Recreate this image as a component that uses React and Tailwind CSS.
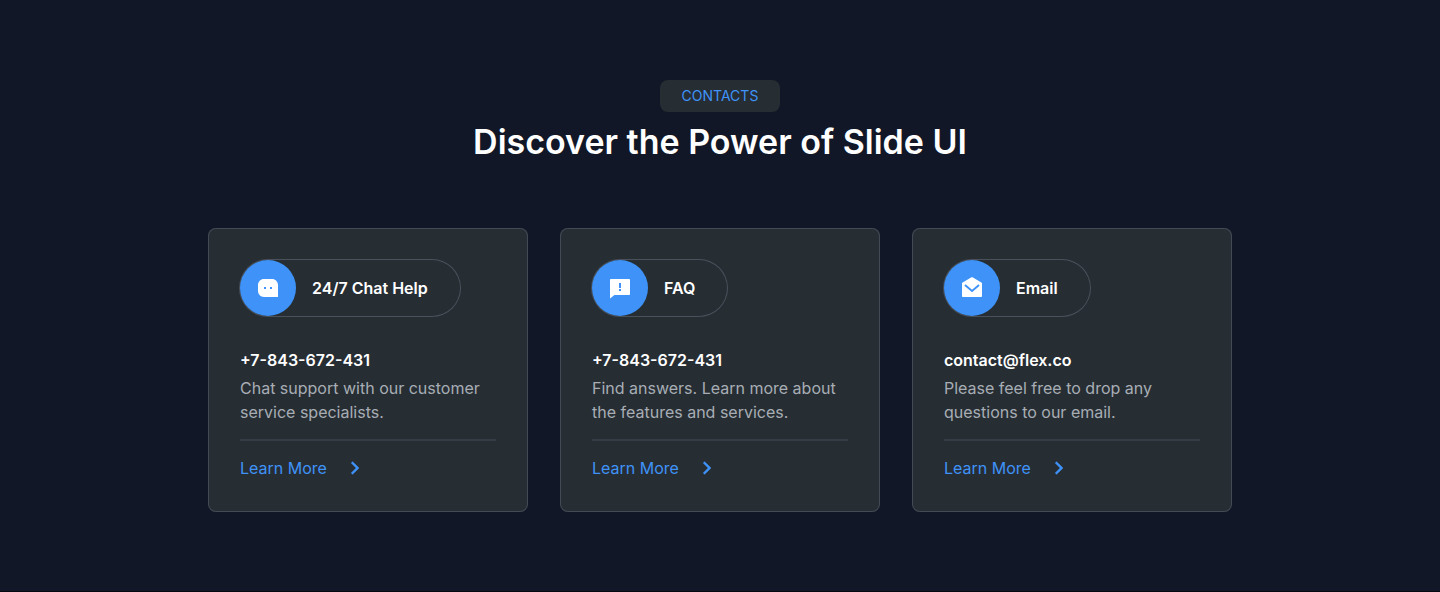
import { RiMessage3Fill, RiFeedbackFill, RiMailOpenFill, RiArrowRightSLine } from "react-icons/ri";

const contacts = [
  {
    icon: RiMessage3Fill,
    label: "24/7 Chat Help",
    contact: "+7-843-672-431",
    text: "Chat support with our customer service specialists.",
  },
  {
    icon: RiFeedbackFill,
    label: "FAQ",
    contact: "+7-843-672-431",
    text: "Find answers. Learn more about the features and services.",
  },
  {
    icon: RiMailOpenFill,
    label: "Email",
    contact: "contact@flex.co",
    text: "Please feel free to drop any questions to our email.",
  },
];

function ContactCard({ icon: Icon, label, contact, text }) {
  return (
    <article className="rounded-lg bg-[#262d33] p-8 inset-ring inset-ring-[#434955]">
      <h2 className="inline-flex items-center gap-4 rounded-full pr-8 align-top font-semibold text-white ring-1 ring-[#4a515b]">
        <span className="flex size-14 items-center justify-center rounded-full bg-[#3f93f8]">
          <Icon className="size-6" aria-hidden="true" />
        </span>
        {label}
      </h2>
      <p className="mt-8 font-semibold text-white">{contact}</p>
      <p className="mt-1 text-[#a8adb5]">{text}</p>
      <div className="my-[15px] h-[2px] bg-[#363d46]" />
      <a href="#" className="inline-flex items-center gap-4 align-top text-[#3f93f8]">
        Learn More
        <RiArrowRightSLine className="size-6 stroke-current stroke-[0.5]" aria-hidden="true" />
      </a>
    </article>
  );
}

export default function App() {
  return (
    <main className="min-h-screen bg-[#111726] px-8 py-20 font-['Inter',sans-serif] text-base shadow-[inset_0_-1px_0_#05070f]">
      <header className="flex flex-col items-center text-center">
        <p className="rounded-lg bg-[#262d33] px-[22px] py-1.5 text-sm text-[#3f93f8]">CONTACTS</p>
        <h1 className="mt-2 text-[34px] leading-11 font-semibold text-white">
          Discover the Power of Slide UI
        </h1>
      </header>
      <section className="mx-auto mt-16 grid max-w-5xl grid-cols-1 gap-8 md:grid-cols-3">
        {contacts.map((item) => (
          <ContactCard key={item.label} {...item} />
        ))}
      </section>
    </main>
  );
}
